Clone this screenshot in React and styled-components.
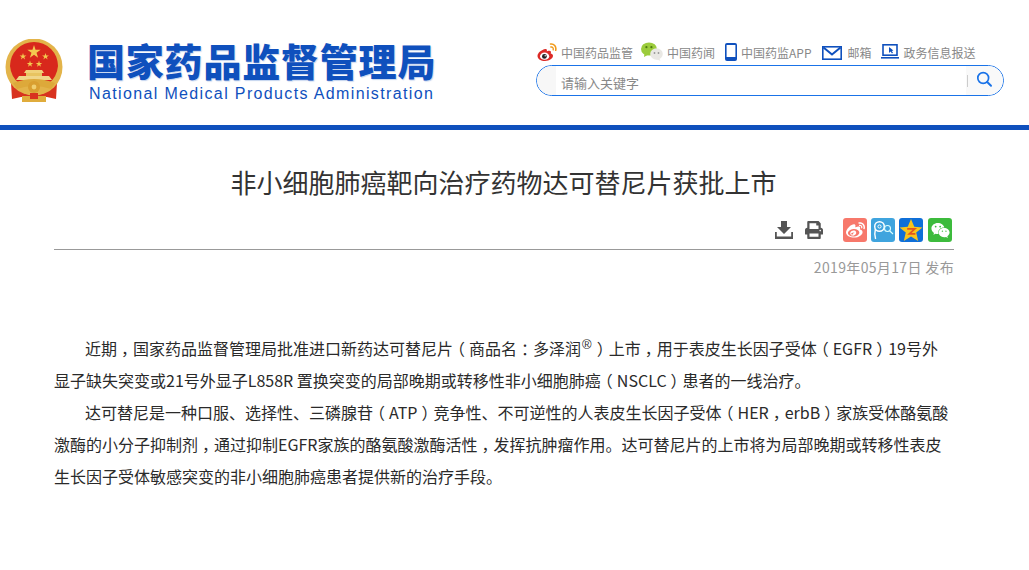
import React from "react";
import styled, { createGlobalStyle } from "styled-components";
import { FaWeibo, FaWeixin, FaPrint } from "react-icons/fa";

const GlobalStyle = createGlobalStyle`
  html, body {
    margin: 0;
    padding: 0;
    background: #fff;
    font-family: "Noto Sans CJK SC", "Liberation Sans", sans-serif;
    overflow: hidden;
  }
`;

const Page = styled.div`
  width: 1029px;
  height: 570px;
  overflow: hidden;
`;

const Header = styled.header`
  height: 125px;
  box-sizing: border-box;
  display: flex;
  justify-content: space-between;
  padding: 39px 25px 0 5px;
`;

const Brand = styled.div`
  display: flex;
  align-items: flex-start;
  gap: 25px;
`;

const BrandText = styled.div`
  display: flex;
  flex-direction: column;
  color: #0f50bd;
  margin-left: -1px;
`;

const BrandCn = styled.div`
  font-size: 38px;
  line-height: 42px;
  font-weight: 900;
  letter-spacing: 0.8px;
  white-space: nowrap;
  text-shadow: 1px 1px 1px rgba(15, 80, 189, 0.25);
`;

const BrandEn = styled.div`
  font-family: "Liberation Sans", sans-serif;
  font-size: 16px;
  line-height: 20px;
  letter-spacing: 1.36px;
  white-space: nowrap;
  margin-top: 3px;
  margin-left: 2px;
`;

const Tools = styled.div`
  width: 468px;
  display: flex;
  flex-direction: column;
  gap: 3px;
  padding-top: 5px;
`;

const Nav = styled.nav`
  display: flex;
  align-items: center;
  height: 18px;
  padding-left: 1px;
`;

const NavItem = styled.a`
  display: flex;
  align-items: center;
  gap: ${(p) => p.$gap || 4}px;
  margin-right: ${(p) => p.$after || 9}px;
  font-size: 12px;
  line-height: 18px;
  color: #888;
  white-space: nowrap;
  svg {
    margin-top: ${(p) => p.$lift || 0}px;
  }
`;

const Search = styled.div`
  height: 31px;
  box-sizing: border-box;
  border: 1px solid #1a73e8;
  border-radius: 16px;
  display: flex;
  align-items: center;
  overflow: hidden;
`;

const SearchCap = styled.div`
  width: 19px;
  height: 100%;
  background: #f7f7f7;
`;

const SearchInput = styled.div`
  flex: 1;
  padding: 3px 0 0 5px;
  font-size: 13px;
  color: #888;
`;

const SearchButton = styled.div`
  width: 37px;
  height: 100%;
  background: #f9f9f9;
  display: flex;
  align-items: center;
  justify-content: center;
  position: relative;
  padding-bottom: 3px;
  box-sizing: border-box;
  &::before {
    content: "";
    position: absolute;
    left: 1px;
    top: 9px;
    width: 1px;
    height: 12px;
    background: #ccc;
  }
`;

const Stripe = styled.div`
  height: 5px;
  background: #0f50bd;
`;

const Main = styled.main`
  width: 900px;
  margin: 0 auto 0 54px;
`;

const Title = styled.h1`
  margin: 32px 0 0;
  padding-right: 1px;
  font-size: 26px;
  line-height: 40px;
  font-weight: 400;
  color: #333;
  text-align: center;
`;

const Actions = styled.div`
  margin-top: 16px;
  height: 31px;
  border-bottom: 1px solid #999;
  display: flex;
  justify-content: flex-end;
  align-items: flex-start;
  padding-right: 2px;
`;

const ActionIcon = styled.span`
  width: 18px;
  height: 24px;
  margin-right: 12px;
  display: flex;
  align-items: center;
  justify-content: center;
  color: #555;
`;

const ShareRow = styled.div`
  display: flex;
  gap: 4px;
  margin-left: 8px;
`;

const ShareButton = styled.span`
  width: 24px;
  height: 24px;
  margin-left: ${(p) => p.$push || 0}px;
  border-radius: 3px;
  background: ${(p) => p.$bg};
  display: flex;
  align-items: center;
  justify-content: center;
  color: #fff;
`;

const PublishDate = styled.div`
  margin-top: 7px;
  text-align: right;
  font-size: 14px;
  line-height: 20px;
  letter-spacing: 0.35px;
  color: #999;
`;

const Article = styled.article`
  margin-top: 55px;
  font-size: 16px;
  line-height: 32px;
  color: #2a2a2a;
`;

const Para = styled.p`
  margin: 0;
  text-indent: 31px;
  sup {
    font-family: "Liberation Sans", sans-serif;
    font-size: 13px;
    line-height: 0;
    margin: 0 1px;
  }
`;

// 标点在字格中央：取半宽字形，再放进一个字宽的格子
const Punct = styled.span`
  display: inline-block;
  width: 1em;
  text-indent: 0;
  text-align: center;
  font-feature-settings: "halt";
`;

const T = ({ children }) =>
  children.split(/([，：（）])/).map((part, i) =>
    i % 2 ? <Punct key={i}>{part}</Punct> : part
  );

const starPath = (cx, cy, r) => {
  let d = "";
  for (let i = 0; i < 10; i++) {
    const rad = i % 2 ? r * 0.38 : r;
    const a = (Math.PI / 5) * i - Math.PI / 2;
    d += `${i ? "L" : "M"}${(cx + rad * Math.cos(a)).toFixed(2)} ${(cy + rad * Math.sin(a)).toFixed(2)} `;
  }
  return d + "Z";
};

const Emblem = () => (
  <svg width="58" height="64" viewBox="0 0 58 64">
    <path d="M6 44 L7 60 L16 58 L42 58 L51 60 L52 44 Z" fill="#d8321f" />
    <circle cx="29" cy="28" r="28.5" fill="#e3b44a" />
    <path d="M29 3 A24 24 0 0 1 53 27 Q52 38 44 44 L14 44 Q6 38 5 27 A24 24 0 0 1 29 3Z" fill="#d8281c" />
    <path d={starPath(29, 13, 7)} fill="#f3c94f" />
    <path d={starPath(18, 17.5, 3.6)} fill="#f3c94f" />
    <path d={starPath(40.5, 17.5, 3.6)} fill="#f3c94f" />
    <path d={starPath(25, 25, 3.4)} fill="#f3c94f" />
    <path d={starPath(34, 25, 3.4)} fill="#f3c94f" />
    <path d="M19 34 L21 31 H37 L39 34Z" fill="#f0d27a" />
    <path d="M21 34 H37 V37 H21Z" fill="#e8c461" />
    <path d="M14 37 H44 L47 41 H11Z" fill="#f0d68a" />
    <path d="M8 44 Q29 36 50 44 L46 50 Q29 44 12 50Z" fill="#dda93a" />
    <circle cx="29" cy="48" r="6" fill="#d99f30" />
    <circle cx="29" cy="48" r="2.4" fill="#f0cf70" />
    <path d="M17 57 H41 V63 H17Z" fill="#e0ac3c" />
    <path d="M25 54 H33 V60 H25Z" fill="#d8321f" />
  </svg>
);

const WeiboIcon = () => (
  <svg width="20" height="20" viewBox="0 0 20 20">
    <path d="M8.5 7 C4.5 7.5 0.5 11 0.5 14 C0.5 17 4 19 8 19 C12.5 19 16 16.5 16 13.8 C16 12.3 14.7 11.8 13.7 11.5 C14.3 10 14 8.8 12.3 8.7 C11.2 8.6 10.2 9.2 9.8 9.3 C10.2 7.8 9.8 6.8 8.5 7Z" fill="#dc2a26" />
    <ellipse cx="7.6" cy="14.2" rx="4.6" ry="3.6" fill="#fff" />
    <circle cx="7.4" cy="14.4" r="2.4" fill="#222" />
    <circle cx="8.2" cy="13.8" r="0.7" fill="#fff" />
    <path d="M13.5 2 C17 1.5 19.5 4.5 18.7 8.3" stroke="#f09a1a" strokeWidth="1.6" fill="none" strokeLinecap="round" />
    <path d="M13.8 5 C15.6 4.7 16.6 6 16.2 7.8" stroke="#f09a1a" strokeWidth="1.4" fill="none" strokeLinecap="round" />
  </svg>
);

const WechatIcon = () => (
  <svg width="22" height="19" viewBox="0 0 22 19">
    <ellipse cx="8" cy="7" rx="8" ry="6.6" fill="#9ccc3c" />
    <path d="M3.5 11 L3 15 L7.5 12.5Z" fill="#9ccc3c" />
    <circle cx="5.4" cy="5.2" r="1.1" fill="#4d7a10" />
    <circle cx="10.4" cy="5.2" r="1.1" fill="#4d7a10" />
    <ellipse cx="15.5" cy="12" rx="6.3" ry="5.8" fill="#e9e8e4" />
    <path d="M18 16 L19.5 18.8 L15 17.2Z" fill="#e9e8e4" />
    <circle cx="13.5" cy="11" r="0.9" fill="#999" />
    <circle cx="17.5" cy="11" r="0.9" fill="#999" />
  </svg>
);

const PhoneIcon = () => (
  <svg width="12" height="18" viewBox="0 0 12 18">
    <rect x="0" y="0" width="12" height="18" rx="2" fill="#0f50bd" />
    <rect x="1.6" y="2" width="8.8" height="12" fill="#fff" />
  </svg>
);

const MailIcon = () => (
  <svg width="20" height="14" viewBox="0 0 20 14">
    <rect x="0.8" y="0.8" width="18.4" height="12.4" fill="#fff" stroke="#0f50bd" strokeWidth="1.6" />
    <path d="M1.5 1.5 L10 8.5 L18.5 1.5" fill="none" stroke="#0f50bd" strokeWidth="2" />
  </svg>
);

const MonitorIcon = () => (
  <svg width="18" height="16" viewBox="0 0 18 16">
    <rect x="2" y="0.8" width="14" height="10.4" fill="#fff" stroke="#0f50bd" strokeWidth="1.6" />
    <path d="M8 3 L8 9 L9.6 7.6 L11 9.4 L12 8.6 L10.6 6.9 L12.4 6.4Z" fill="#0f50bd" />
    <path d="M0 13 H18 V14.6 H0Z" fill="#0f50bd" />
  </svg>
);

const SearchIcon = () => (
  <svg width="17" height="17" viewBox="0 0 17 17">
    <circle cx="7.2" cy="7" r="5.4" fill="none" stroke="#1a73e8" strokeWidth="1.7" />
    <path d="M11.2 11 L15 14.8" stroke="#1a73e8" strokeWidth="2" strokeLinecap="round" />
  </svg>
);

const DownloadIcon = () => (
  <svg width="18" height="18" viewBox="0 0 18 18">
    <path d="M6 0 H12 V6 H16 L9 13 L2 6 H6Z" fill="#555" />
    <path d="M0 11 H1.8 V15.6 H16.2 V11 H18 V18 H0Z" fill="#555" />
  </svg>
);

const TencentIcon = () => (
  <svg width="22" height="22" viewBox="0 0 22 22">
    <circle cx="7.5" cy="7.5" r="4.8" fill="none" stroke="#fff" strokeWidth="1.5" />
    <circle cx="7.5" cy="7.5" r="1.6" fill="none" stroke="#fff" strokeWidth="1" />
    <path d="M3.4 10 C2.4 14 2.6 17 3.6 20" stroke="#fff" strokeWidth="1.4" fill="none" />
    <circle cx="15.5" cy="9.5" r="3" fill="none" stroke="#dff" strokeWidth="1.1" />
    <path d="M17.8 12 L21 15" stroke="#dff" strokeWidth="1.1" />
  </svg>
);

const QzoneIcon = () => (
  <svg width="24" height="24" viewBox="0 0 22 22">
    <path d="M11 1 L14 8 L21.5 8.6 L15.8 13.4 L17.6 21 L11 17 L4.4 21 L6.2 13.4 L0.5 8.6 L8 8Z" fill="#f8c51c" />
    <path d="M7.5 10 H14.5 L9.5 14.6 H15" fill="none" stroke="#e2571c" strokeWidth="1.6" />
  </svg>
);

const App = () => (
  <Page>
    <GlobalStyle />
    <Header>
      <Brand>
        <Emblem />
        <BrandText>
          <BrandCn>国家药品监督管理局</BrandCn>
          <BrandEn>National Medical Products Administration</BrandEn>
        </BrandText>
      </Brand>
      <Tools>
        <Nav>
          <NavItem $after={8} $lift={-3}><WeiboIcon />中国药品监管</NavItem>
          <NavItem $after={10} $lift={-3}><WechatIcon />中国药闻</NavItem>
          <NavItem $after={10} $lift={-3}><PhoneIcon />中国药监APP</NavItem>
          <NavItem $gap={6}><MailIcon />邮箱</NavItem>
          <NavItem $gap={5} $lift={-2}><MonitorIcon />政务信息报送</NavItem>
        </Nav>
        <Search>
          <SearchCap />
          <SearchInput>请输入关键字</SearchInput>
          <SearchButton><SearchIcon /></SearchButton>
        </Search>
      </Tools>
    </Header>
    <Stripe />
    <Main>
      <Title>非小细胞肺癌靶向治疗药物达可替尼片获批上市</Title>
      <Actions>
        <ActionIcon><DownloadIcon /></ActionIcon>
        <ActionIcon><FaPrint size={18} /></ActionIcon>
        <ShareRow>
          <ShareButton $bg="#f7786b"><FaWeibo size={19} /></ShareButton>
          <ShareButton $bg="#3fa4de"><TencentIcon /></ShareButton>
          <ShareButton $bg="#0f6fd8"><QzoneIcon /></ShareButton>
          <ShareButton $bg="#3dbb3d" $push={1}><FaWeixin size={19} /></ShareButton>
        </ShareRow>
      </Actions>
      <PublishDate>2019年05月17日 发布</PublishDate>
      <Article>
        <Para>
          <T>近期，国家药品监督管理局批准进口新药达可替尼片（商品名：多泽润</T><sup>®</sup><T>）上市，用于表皮生长因子受体（EGFR）19号外</T><br />
          <T>显子缺失突变或21号外显子L858R 置换突变的局部晚期或转移性非小细胞肺癌（NSCLC）患者的一线治疗。</T>
        </Para>
        <Para>
          <T>达可替尼是一种口服、选择性、三磷腺苷（ATP）竞争性、不可逆性的人表皮生长因子受体（HER，erbB）家族受体酪氨酸激酶的小分子抑制剂，通过抑制EGFR家族的酪氨酸激酶活性，发挥抗肿瘤作用。达可替尼片的上市将为局部晚期或转移性表皮生长因子受体敏感突变的非小细胞肺癌患者提供新的治疗手段。</T>
        </Para>
      </Article>
    </Main>
  </Page>
);

export default App;
